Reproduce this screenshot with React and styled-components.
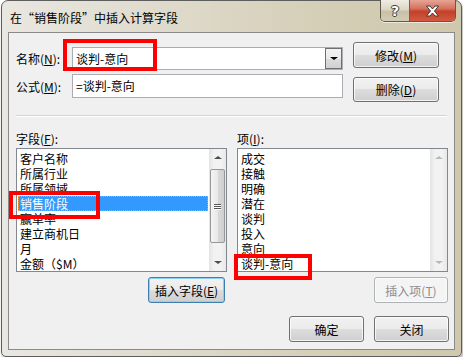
import React from 'react'
import { styled, createGlobalStyle } from 'styled-components'

const GlobalStyle = createGlobalStyle`
html, body {
  margin: 0;
  padding: 0;
  background: #ffffff;
}
body {
  font-family: "Noto Sans CJK SC", "Noto Sans", sans-serif;
  font-size: 12px;
  color: #000;
}
`

const Window = styled.div`
box-sizing: border-box;
width: 461px;
height: 357px;
margin-left: 1px;
border: 1px solid #5e5e5e;
border-radius: 7px 7px 5px 5px;
background: linear-gradient(to right, #e9e7e1 0%, #dcd7c6 45%, #d3cdb4 75%, #cfc8ad 100%);
box-shadow: 1px 2px 3px rgba(0,0,0,0.35);
padding-bottom: 6px;
display: flex;
flex-direction: column;
`

const TitleBar = styled.div`
height: 31px;
display: flex;
align-items: flex-start;
`

const Title = styled.div`
padding-left: 8px;
margin-top: 9px;
line-height: 16px;
font-size: 12px;
color: #000;
`

const Caption = styled.div`
margin-left: auto;
margin-right: 5px;
margin-top: -1px;
display: flex;
height: 21px;
border: 1px solid #5f5a4c;
border-top: none;
border-radius: 0 0 5px 5px;
overflow: hidden;
box-shadow: 0 1px 0 rgba(255,255,255,0.6);
`

const HelpBtn = styled.div`
width: 28px;
display: flex;
align-items: center;
justify-content: center;
background: linear-gradient(to bottom, #efece4 0%, #dcd6c5 45%, #c8c0a6 55%, #d3ccb5 100%);
border-right: 1px solid #6a6455;
font-weight: bold;
font-size: 14px;
font-family: "DejaVu Sans", sans-serif;
color: #fff;
text-shadow: 0 0 1px #333, 1px 0 0 #444, -1px 0 0 #444, 0 1px 0 #444, 0 -1px 0 #444;
`

const CloseBtn = styled.div`
width: 45px;
display: flex;
align-items: center;
justify-content: center;
background: linear-gradient(to bottom, #e6a595 0%, #d7725d 40%, #c2412a 55%, #d25a40 100%);
`

const Client = styled.div`
flex: 1;
margin: 0 6px;
background: #f0f0f0;
border: 1px solid #8a8a8a;
display: flex;
flex-direction: column;
`

const TopSection = styled.div`
height: 82px;
display: flex;
align-items: flex-start;
padding-left: 7px;
`

const FormCol = styled.div`
margin-top: 14px;
display: flex;
flex-direction: column;
gap: 4px;
`

const FormRow = styled.div`
display: flex;
align-items: center;
height: ${p => p.$h}px;
`

const Label = styled.div`
width: 56px;
line-height: 15px;
`

const Combo = styled.div`
position: relative;
box-sizing: border-box;
width: 271px;
height: 23px;
background: #fff;
border: 1px solid #abadb3;
display: flex;
align-items: center;
`

const TextBox = styled(Combo)`
height: 24px;
`

const Value = styled.div`
flex: 1;
padding-left: 3px;
line-height: 16px;
`

const DropBtn = styled.div`
box-sizing: border-box;
width: 17px;
height: 21px;
border: 1px solid #707070;
background: linear-gradient(to bottom, #f2f2f2, #ebebeb 50%, #dddddd 51%, #cfcfcf);
display: flex;
align-items: center;
justify-content: center;
`

const Triangle = styled.div`
width: 0;
height: 0;
border-left: ${p => p.$s}px solid transparent;
border-right: ${p => p.$s}px solid transparent;
${p => p.$up ? 'border-bottom' : 'border-top'}: ${p => p.$s - 1}px solid ${p => p.$c || '#000'};
`

const BtnCol = styled.div`
margin-left: 10px;
margin-top: 9px;
display: flex;
flex-direction: column;
gap: 9px;
`

const Button = styled.div`
box-sizing: border-box;
width: ${p => p.$w}px;
height: ${p => p.$h || 25}px;
border: 1px solid ${p => p.$default ? '#3c7fb1' : '#707070'};
border-radius: 3px;
background: linear-gradient(to bottom, #f2f2f2 0%, #ebebeb 49%, #dddddd 50%, #cfcfcf 100%);
box-shadow: inset 0 0 0 1px ${p => p.$default ? '#8ed0f5' : 'rgba(255,255,255,0.75)'};
display: flex;
align-items: center;
justify-content: center;
line-height: 15px;
color: ${p => p.$disabled ? '#8d8d8d' : '#000'};
${p => p.$disabled && `
  border-color: #adb2b5;
  background: #f4f4f4;
`}
`

const Separator = styled.div`
margin: 0 7px;
border-top: 1px solid #d5d5d5;
border-bottom: 1px solid #ffffff;
`

const Lower = styled.div`
display: flex;
gap: 10px;
padding: 0 6px 0 7px;
margin-top: 14px;
`

const Column = styled.div`
width: 211px;
display: flex;
flex-direction: column;
`

const ListLabel = styled.div`
height: 15px;
line-height: 15px;
margin-bottom: 2px;
`

const ListBox = styled.div`
position: relative;
box-sizing: border-box;
height: 124px;
background: #fff;
border: 1px solid #828790;
display: flex;
`

const Items = styled.div`
flex: 1;
padding: 2px 0 0 1px;
overflow: hidden;
`

const Item = styled.div`
height: 15px;
line-height: 15px;
padding-left: 2px;
margin-right: 1px;
white-space: nowrap;
${p => p.$selected && `
  background: #3399ff;
  color: #fff;
  outline: 1px dotted #f0a040;
  outline-offset: -1px;
`}
`

const ScrollBar = styled.div`
width: 17px;
display: flex;
flex-direction: column;
background: linear-gradient(to right, #e3e3e3, #f2f2f2 30%, #f2f2f2 70%, #e8e8e8);
`

const ScrollArrow = styled.div`
height: 17px;
display: flex;
align-items: center;
justify-content: center;
`

const Track = styled.div`
flex: 1;
display: flex;
flex-direction: column;
padding-top: 3px;
`

const Thumb = styled.div`
box-sizing: border-box;
height: 74px;
margin: 0 0 0 1px;
width: 15px;
border: 1px solid #979797;
border-radius: 2px;
background: linear-gradient(to right, #f4f4f4, #e8e8e8 50%, #d9d9d9 51%, #cfcfcf);
display: flex;
flex-direction: column;
align-items: center;
justify-content: center;
gap: 1px;
`

const Grip = styled.div`
width: 7px;
height: 1px;
background: #555;
box-shadow: 0 1px 0 #fff;
`

const ButtonRow = styled.div`
display: flex;
justify-content: flex-end;
gap: 10px;
margin-top: ${p => p.$mt}px;
padding-right: ${p => p.$pr}px;
`

const RedMark = styled.div`
position: absolute;
box-sizing: border-box;
left: ${p => p.$x}px;
top: ${p => p.$y}px;
width: ${p => p.$w}px;
height: ${p => p.$h}px;
border: 4px solid #ff0000;
pointer-events: none;
z-index: 2;
`

const Scroll = ({ disabled }) => (
    <ScrollBar>
        <ScrollArrow>
            <Triangle $up $s={4} $c={disabled ? '#b9b9b9' : '#4d4d4d'} />
        </ScrollArrow>
        <Track>
            {!disabled &&
                <Thumb>
                    <Grip />
                    <Grip />
                    <Grip />
                </Thumb>
            }
        </Track>
        <ScrollArrow>
            <Triangle $s={4} $c={disabled ? '#b9b9b9' : '#4d4d4d'} />
        </ScrollArrow>
    </ScrollBar>
)

const fields = ['客户名称', '所属行业', '所属领域', '销售阶段', '赢单率', '建立商机日', '月', '金额（$M）']
const values = ['成交', '接触', '明确', '潜在', '谈判', '投入', '意向', '谈判-意向']

const App = () => {
    return (
        <>
            <GlobalStyle />
            <Window>
                <TitleBar>
                    <Title>在“销售阶段”中插入计算字段</Title>
                    <Caption>
                        <HelpBtn>?</HelpBtn>
                        <CloseBtn>
                            <svg width="15" height="12" viewBox="0 0 15 12">
                                <path d="M1.5 1 H5 L7.5 4 L10 1 H13.5 L9.5 6 L13.5 11 H10 L7.5 8 L5 11 H1.5 L5.5 6 Z"
                                    fill="#ffffff" stroke="#3a3a3a" strokeWidth="1" strokeLinejoin="round" />
                            </svg>
                        </CloseBtn>
                    </Caption>
                </TitleBar>

                <Client>
                    <TopSection>
                        <FormCol>
                            <FormRow $h={23}>
                                <Label>名称(<u>N</u>):</Label>
                                <Combo>
                                    <Value>谈判-意向</Value>
                                    <DropBtn><Triangle $s={4} /></DropBtn>
                                    <RedMark $x={-10} $y={-9} $w={94} $h={32} />
                                </Combo>
                            </FormRow>
                            <FormRow $h={24}>
                                <Label>公式(<u>M</u>):</Label>
                                <TextBox>
                                    <Value>=谈判-意向</Value>
                                </TextBox>
                            </FormRow>
                        </FormCol>
                        <BtnCol>
                            <Button $w={86} $h={26}>修改(<u>M</u>)</Button>
                            <Button $w={86}>删除(<u>D</u>)</Button>
                        </BtnCol>
                    </TopSection>

                    <Separator />

                    <Lower>
                        <Column>
                            <ListLabel>字段(<u>F</u>):</ListLabel>
                            <ListBox>
                                <Items>
                                    {fields.map((f, i) =>
                                        <Item key={f} $selected={i === 3}>{f}</Item>
                                    )}
                                </Items>
                                <Scroll />
                                <RedMark $x={-8} $y={42} $w={91} $h={28} />
                            </ListBox>
                            <ButtonRow $mt={5} $pr={2}>
                                <Button $w={77} $h={26} $default>插入字段(<u>E</u>)</Button>
                            </ButtonRow>
                        </Column>
                        <Column>
                            <ListLabel>项(<u>I</u>):</ListLabel>
                            <ListBox>
                                <Items>
                                    {values.map(v =>
                                        <Item key={v}>{v}</Item>
                                    )}
                                </Items>
                                <Scroll disabled />
                                <RedMark $x={-4} $y={105} $w={78} $h={26} />
                            </ListBox>
                            <ButtonRow $mt={5} $pr={0}>
                                <Button $w={74} $h={26} $disabled>插入项(<u>T</u>)</Button>
                            </ButtonRow>
                        </Column>
                    </Lower>

                    <ButtonRow $mt={13} $pr={5}>
                        <Button $w={75} $h={26}>确定</Button>
                        <Button $w={75} $h={26}>关闭</Button>
                    </ButtonRow>
                </Client>
            </Window>
        </>
    )
}

export default App
